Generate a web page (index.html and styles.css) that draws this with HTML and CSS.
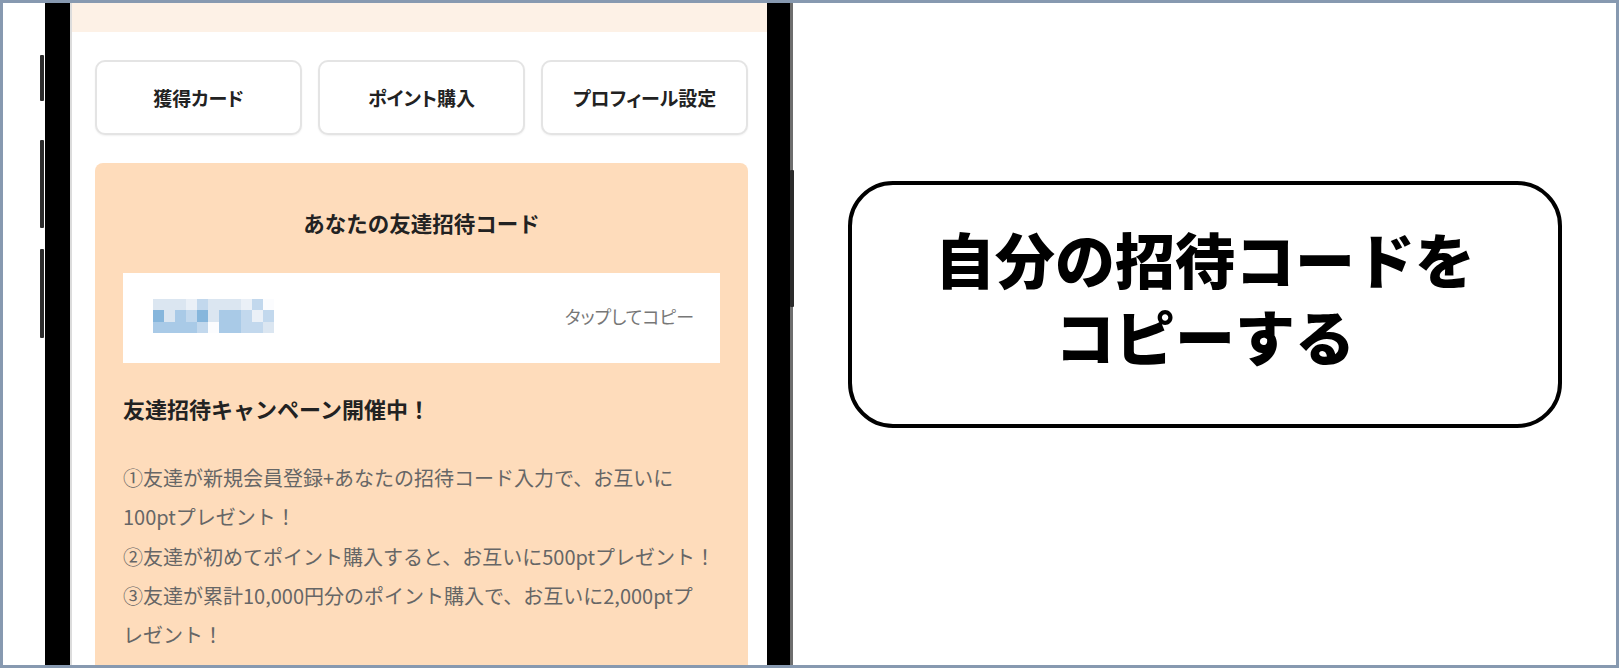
FILE: index.html
```html
<!DOCTYPE html>
<html lang="ja">

<head>
  <meta charset="UTF-8">
  <meta name="viewport" content="width=device-width, initial-scale=1.0">
  <title>招待コード</title>
  <link rel="stylesheet" href="styles.css">
</head>

<body>
  <div class="frame">
    <div class="device">
      <div class="keys keys-left">
        <span class="key key-mute"></span>
        <span class="key key-up"></span>
        <span class="key key-down"></span>
      </div>

      <div class="phone">
        <div class="screen">
          <div class="top-band"></div>

          <div class="menu">
            <button class="menu-btn">獲得カード</button>
            <button class="menu-btn">ポイント購入</button>
            <button class="menu-btn">プロフィール設定</button>
          </div>

          <div class="invite">
            <h2 class="invite-title">あなたの友達招待コード</h2>

            <div class="code-box">
              <!-- モザイク処理されたコード -->
              <div class="mosaic">
                <span class="s2"></span><span class="s2"></span><span class="s2"></span><span class="s1"></span><span class="s3"></span><span class="s2"></span><span class="s2"></span><span class="s2"></span><span class="s1"></span><span class="s3"></span><span class="s0"></span>
                <span class="s5"></span><span class="s2"></span><span class="s4"></span><span class="s3"></span><span class="s5"></span><span class="s2"></span><span class="s4"></span><span class="s4"></span><span class="s3"></span><span class="s1"></span><span class="s3"></span>
                <span class="s4"></span><span class="s4"></span><span class="s4"></span><span class="s4"></span><span class="s3"></span><span class="s0"></span><span class="s4"></span><span class="s4"></span><span class="s3"></span><span class="s3"></span><span class="s2"></span>
              </div>
              <span class="copy">タップしてコピー</span>
            </div>

            <h3 class="campaign">友達招待キャンペーン開催中！</h3>
            <p class="rules">
              ①友達が新規会員登録+あなたの招待コード入力で、お互いに<br>
              100ptプレゼント！<br>
              ②友達が初めてポイント購入すると、お互いに500ptプレゼント！<br>
              ③友達が累計10,000円分のポイント購入で、お互いに2,000ptプ<br>
              レゼント！
            </p>
          </div>
        </div>
      </div>

      <div class="keys keys-right">
        <span class="key key-power"></span>
      </div>
    </div>

    <div class="note">
      <div class="callout">自分の招待コードを<br>コピーする</div>
    </div>
  </div>
</body>

</html>
```

FILE: styles.css
```css
* {
  box-sizing: border-box;
}

body {
  margin: 0;
  background: #fff;
  font-family: "Noto Sans CJK JP", "Noto Sans", sans-serif;
}

.frame {
  width: 1619px;
  height: 668px;
  border: 3px solid #8799b0;
  display: flex;
  overflow: hidden;
  background: #fff;
}

/* スマホ本体 */
.device {
  display: flex;
  padding-left: 37px;
  height: 100%;
}

.keys {
  width: 4px;
  display: flex;
  flex-direction: column;
}

.key {
  display: block;
  width: 4px;
  background: #2b2b2b;
  border-radius: 1px;
}

.keys-left {
  padding-top: 52px;
}

.key-mute {
  height: 46px;
}

.key-up {
  height: 88px;
  margin-top: 39px;
}

.key-down {
  height: 89px;
  margin-top: 21px;
}

.keys-right {
  padding-top: 167px;
}

.key-power {
  height: 137px;
}

.phone {
  margin-left: 1px;
  height: 100%;
  border-left: 25px solid #000;
  border-right: 23px solid #000;
  box-shadow: 3px 0 0 #6e6e6e;
}

.screen {
  width: 697px;
  height: 100%;
  border-left: 2px solid #dcdcdc;
  background: #fff;
  overflow: hidden;
}

.top-band {
  height: 29px;
  background: #fdf1e6;
}

.menu {
  display: grid;
  grid-template-columns: repeat(3, 1fr);
  gap: 16px;
  margin: 28px 19px 0 23px;
}

.menu-btn {
  height: 75px;
  background: #fff;
  border: 2px solid #e4e4e4;
  border-radius: 10px;
  font-family: inherit;
  font-size: 19px;
  font-weight: 700;
  color: #222;
  font-feature-settings: "palt";
  box-shadow: 0 1px 2px rgba(0, 0, 0, 0.06);
}

/* 招待コードカード */
.invite {
  margin: 28px 19px 0 23px;
  padding: 45px 28px 40px;
  background: #fedcbb;
  border-radius: 8px;
}

.invite-title {
  margin: 0;
  font-size: 21.5px;
  line-height: 30px;
  font-weight: 700;
  color: #222;
  text-align: center;
}

.code-box {
  margin-top: 35px;
  height: 90px;
  background: #fff;
  display: flex;
  align-items: center;
  justify-content: space-between;
  padding: 0 26px 4px 30px;
}

.mosaic {
  display: grid;
  grid-template-columns: repeat(11, 11px);
  grid-template-rows: 11px 12px 11px;
  filter: blur(0.4px);
}

.s0 { background: #fbfcfe; }
.s1 { background: #eaf0f7; }
.s2 { background: #dbe6f1; }
.s3 { background: #c2d8ed; }
.s4 { background: #a9cae7; }
.s5 { background: #86b6dc; }

.copy {
  font-size: 18px;
  color: #777;
  font-feature-settings: "palt";
}

.campaign {
  margin: 30px 0 0;
  font-size: 22px;
  line-height: 30px;
  font-weight: 700;
  color: #222;
}

.rules {
  margin: 35px 0 0;
  font-size: 20px;
  line-height: 39.3px;
  color: #666;
  white-space: nowrap;
}

/* 右側の説明 */
.note {
  flex: 1;
  display: flex;
  justify-content: center;
  align-items: flex-start;
  padding-top: 178px;
}

.callout {
  width: 714px;
  height: 247px;
  border: 4px solid #000;
  border-radius: 45px;
  padding-top: 34px;
  text-align: center;
  font-size: 60px;
  line-height: 77px;
  font-weight: 900;
  color: #000;
}
```
